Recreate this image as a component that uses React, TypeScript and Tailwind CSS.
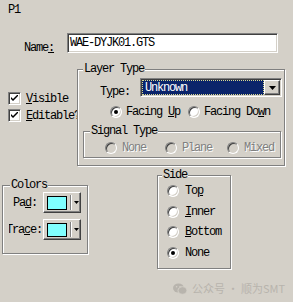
import React from "react";

const sunken =
  "border border-t-[#808080] border-l-[#808080] border-b-white border-r-white shadow-[inset_1px_1px_0_#404040,inset_-1px_-1px_0_#d4d0c8]";
const raised =
  "border border-t-white border-l-white border-b-[#404040] border-r-[#404040] shadow-[inset_-1px_-1px_0_#808080]";
const group =
  "relative border border-[#808080] shadow-[inset_1px_1px_0_#fff,1px_1px_0_#fff]";
const legend = "absolute top-[-7px] px-[1px] leading-[12px] bg-[#d4d0c8]";
const disabledText = "text-[#808080] [text-shadow:1px_1px_0_#fff]";

function Radio({ checked = false, disabled = false }: { checked?: boolean; disabled?: boolean }) {
  return (
    <span
      className={`inline-flex w-[12px] h-[12px] rounded-full items-center justify-center shrink-0 ${sunken} ${
        disabled ? "bg-[#d4d0c8]" : "bg-white"
      }`}
    >
      {checked && <span className="w-[4px] h-[4px] rounded-full bg-black" />}
    </span>
  );
}

function Check() {
  return (
    <span className={`inline-flex w-[13px] h-[13px] bg-white items-center justify-center shrink-0 ${sunken}`}>
      <svg width="7" height="7" viewBox="0 0 7 7">
        <path d="M0 2 L0 4 L2 6 L7 1 L7 -1 L2 4 Z" fill="#000" />
      </svg>
    </span>
  );
}

function ColorButton() {
  return (
    <div className={`flex items-center w-[38px] h-[21px] bg-[#d4d0c8] pl-[3px] ${raised}`}>
      <div className="w-[20px] h-[14px] bg-[#80ffff] border border-black" />
      <div className="ml-[3px] w-[2px] h-[15px] border-l border-l-[#808080] border-r border-r-white" />
      <svg className="ml-[2px]" width="5" height="3" viewBox="0 0 5 3">
        <path d="M0 0 H5 L2.5 3 Z" fill="#000" />
      </svg>
    </div>
  );
}

export default function App() {
  return (
    <div className="w-[293px] h-[302px] bg-[#d4d0c8] relative overflow-hidden text-black font-['Liberation_Mono',monospace] text-[12px] tracking-[-1.2px] leading-[12px]">
      <div className="ml-[8px] mt-[4px] h-[12px]">P1</div>

      {/* Name row */}
      <div className="flex mt-[17px] h-[20px]">
        <div className="ml-[24px] w-[43px] self-end mb-[-1px]">
          Name<span className="underline underline-offset-[1px]">:</span>
        </div>
        <div className={`w-[211px] h-[20px] bg-white flex items-center pl-[2px] ${sunken}`}>WAE-DYJK01.GTS</div>
      </div>

      {/* Row 3 */}
      <div className="flex mt-[16px]">
        <div className="w-[77px] overflow-hidden pt-[23px] pl-[8px] flex flex-col gap-[4px]">
          <div className="flex items-center gap-[5px] whitespace-nowrap">
            <Check />
            <span>
              <span className="underline underline-offset-[1px]">V</span>isible
            </span>
          </div>
          <div className="flex items-center gap-[5px] whitespace-nowrap">
            <Check />
            <span>
              <span className="underline underline-offset-[1px]">E</span>ditable?
            </span>
          </div>
        </div>

        <div className={`${group} w-[208px] h-[97px]`}>
          <span className={`${legend} left-[5px]`}>Layer Type</span>
          <div className="flex mt-[8px]">
            <div className="ml-[22px] w-[40px] self-end mb-[-1px]">
              T<span className="underline underline-offset-[1px]">y</span>pe:
            </div>
            <div className={`w-[142px] h-[19px] bg-white flex p-[1px] ${sunken}`}>
              <div className="flex-1 bg-[#0a246a] text-white border border-dotted border-[#d8d890] flex items-center pl-[2px]">
                Unknown
              </div>
              <div className={`w-[16px] bg-[#d4d0c8] flex items-center justify-center ${raised}`}>
                <svg width="7" height="4" viewBox="0 0 7 4">
                  <path d="M0 0 H7 L3.5 4 Z" fill="#000" />
                </svg>
              </div>
            </div>
          </div>

          <div className="flex items-center mt-[9px] ml-[32px] whitespace-nowrap">
            <Radio checked />
            <span className="ml-[4px]">
              Facing <span className="underline underline-offset-[1px]">U</span>p
            </span>
            <span className="ml-[8px] flex">
              <Radio />
            </span>
            <span className="ml-[4px]">
              Facing Do<span className="underline underline-offset-[1px]">w</span>n
            </span>
          </div>

          <div className={`${group} ml-[5px] mt-[13px] w-[198px] h-[27px]`}>
            <span className={`${legend} left-[6px]`}>Signal Type</span>
            <div className="flex items-center mt-[10px] ml-[21px] whitespace-nowrap">
              <Radio disabled />
              <span className={`ml-[5px] ${disabledText}`}>None</span>
              <span className="ml-[19px] flex">
                <Radio disabled />
              </span>
              <span className={`ml-[5px] ${disabledText}`}>Plane</span>
              <span className="ml-[15px] flex">
                <Radio disabled />
              </span>
              <span className={`ml-[5px] ${disabledText}`}>Mixed</span>
            </div>
          </div>
        </div>
      </div>

      {/* Row 4 */}
      <div className="flex items-start mt-[9px]">
        <div className={`${group} ml-[2px] mt-[10px] w-[86px] h-[69px]`}>
          <span className={`${legend} left-[7px]`}>Colors</span>
          <div className="flex items-center mt-[6px]">
            <div className="ml-[10px] w-[30px]">
              Pa<span className="underline underline-offset-[1px]">d</span>:
            </div>
            <ColorButton />
          </div>
          <div className="flex items-center mt-[6px]">
            <div className="ml-[6px] w-[34px] overflow-hidden whitespace-nowrap">
              <span className="ml-[-3px] inline-block">
                Tra<span className="underline underline-offset-[1px]">c</span>e:
              </span>
            </div>
            <ColorButton />
          </div>
        </div>

        <div className={`${group} ml-[69px] w-[74px] h-[94px]`}>
          <span className={`${legend} left-[4px]`}>Side</span>
          <div className="flex flex-col ml-[9px] whitespace-nowrap">
            <div className="flex items-center mt-[9px]">
              <Radio />
              <span className="ml-[6px]">
                To<span className="underline underline-offset-[1px]">p</span>
              </span>
            </div>
            <div className="flex items-center mt-[9px]">
              <Radio />
              <span className="ml-[6px]">
                <span className="underline underline-offset-[1px]">I</span>nner
              </span>
            </div>
            <div className="flex items-center mt-[8px]">
              <Radio />
              <span className="ml-[6px]">
                <span className="underline underline-offset-[1px]">B</span>ottom
              </span>
            </div>
            <div className="flex items-center mt-[9px]">
              <Radio checked />
              <span className="ml-[6px]">None</span>
            </div>
          </div>
        </div>
      </div>

      {/* watermark */}
      <div className="absolute left-[173px] top-[282px] flex items-center gap-[5px] whitespace-nowrap text-[#b8b4ad] font-['Noto_Sans_CJK_SC',sans-serif] text-[11px] tracking-normal leading-[13px]">
        <svg width="14" height="12" viewBox="0 0 14 12" className="shrink-0">
          <ellipse cx="5.5" cy="5" rx="5.5" ry="4.5" fill="#b8b4ad" />
          <ellipse cx="9.5" cy="7.5" rx="4.5" ry="3.8" fill="#b8b4ad" stroke="#d4d0c8" strokeWidth="1" />
          <circle cx="3.6" cy="3.8" r="0.8" fill="#d4d0c8" />
          <circle cx="7" cy="3.8" r="0.8" fill="#d4d0c8" />
        </svg>
        <span>公众号 · 顺为SMT</span>
      </div>
    </div>
  );
}
